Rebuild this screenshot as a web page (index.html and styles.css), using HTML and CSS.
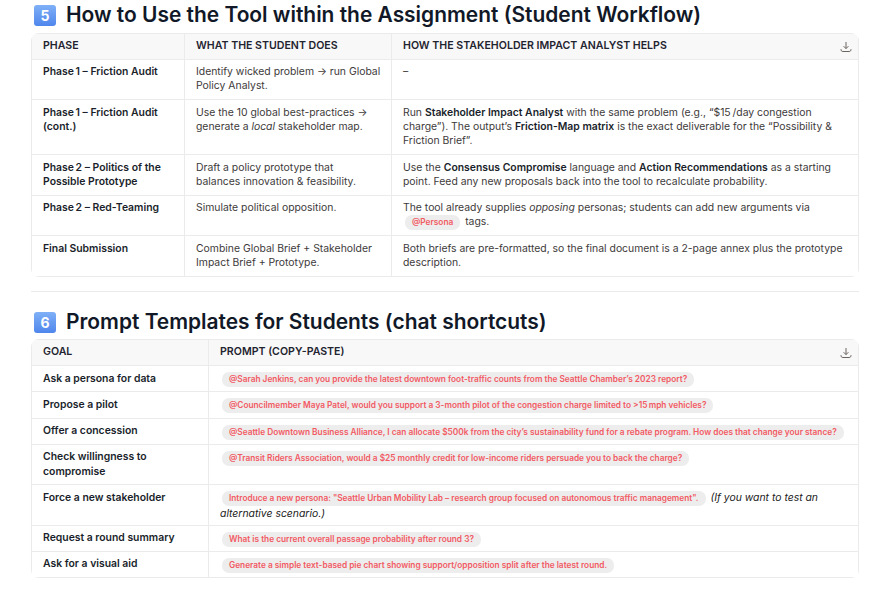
FILE: index.html
```html
<!DOCTYPE html>
<html lang="en">
<head>
<meta charset="utf-8">
<title>Student Workflow</title>
<link rel="stylesheet" href="styles.css">
</head>
<body>
<main class="doc">
  <h2 class="heading"><span class="keycap">5</span>How to Use the Tool within the Assignment (Student Workflow)</h2>
  <div class="table-wrap">
    <svg class="dl" viewBox="0 0 12 12" aria-hidden="true"><path d="M6 1v6.5M3.6 5.2 6 7.6l2.4-2.4M1 8.2c0 1.6.6 2.3 2 2.3h6c1.4 0 2-.7 2-2.3"/></svg>
    <table class="grid workflow">
      <thead><tr><th class="c1">PHASE</th><th class="c2">WHAT THE STUDENT DOES</th><th>HOW THE STAKEHOLDER IMPACT ANALYST HELPS</th></tr></thead>
      <tbody>
        <tr><td><b>Phase&#8239;1 – Friction Audit</b></td><td>Identify wicked problem → run Global Policy Analyst.</td><td>–</td></tr>
        <tr class="r55"><td><b>Phase&#8239;1 – Friction Audit (cont.)</b></td><td>Use the 10 global best-practices → generate a <i>local</i> stakeholder map.</td><td>Run <b>Stakeholder Impact Analyst</b> with the same problem (e.g., “$15&#8239;/day congestion charge”). The output’s <b>Friction-Map matrix</b> is the exact deliverable for the “Possibility &amp; Friction Brief”.</td></tr>
        <tr class="r41"><td><b>Phase&#8239;2 – Politics of the Possible Prototype</b></td><td>Draft a policy prototype that balances innovation &amp; feasibility.</td><td>Use the <b>Consensus Compromise</b> language and <b>Action Recommendations</b> as a starting point. Feed any new proposals back into the tool to recalculate probability.</td></tr>
        <tr><td><b>Phase&#8239;2 – Red-Teaming</b></td><td>Simulate political opposition.</td><td>The tool already supplies <i>opposing</i> personas; students can add new arguments via <code class="chip">@Persona</code> tags.</td></tr>
        <tr class="r41"><td><b>Final Submission</b></td><td>Combine Global Brief + Stakeholder Impact Brief + Prototype.</td><td>Both briefs are pre-formatted, so the final document is a 2-page annex plus the prototype description.</td></tr>
      </tbody>
    </table>
  </div>
  <hr class="rule">
  <h2 class="heading"><span class="keycap">6</span>Prompt Templates for Students (chat shortcuts)</h2>
  <div class="table-wrap">
    <svg class="dl" viewBox="0 0 12 12" aria-hidden="true"><path d="M6 1v6.5M3.6 5.2 6 7.6l2.4-2.4M1 8.2c0 1.6.6 2.3 2 2.3h6c1.4 0 2-.7 2-2.3"/></svg>
    <table class="grid prompts">
      <thead><tr><th class="g1">GOAL</th><th>PROMPT (COPY-PASTE)</th></tr></thead>
      <tbody>
        <tr><td><b>Ask a persona for data</b></td><td><code class="chip">@Sarah Jenkins, can you provide the latest downtown foot-traffic counts from the Seattle Chamber’s 2023 report?</code></td></tr>
        <tr class="r27"><td><b>Propose a pilot</b></td><td><code class="chip">@Councilmember Maya Patel, would you support a 3-month pilot of the congestion charge limited to &gt;15&#8239;mph vehicles?</code></td></tr>
        <tr class="up"><td><b>Offer a concession</b></td><td><code class="chip">@Seattle Downtown Business Alliance, I can allocate $500k from the city’s sustainability fund for a rebate program. How does that change your stance?</code></td></tr>
        <tr class="up r40"><td><b>Check willingness to compromise</b></td><td><code class="chip">@Transit Riders Association, would a $25 monthly credit for low-income riders persuade you to back the charge?</code></td></tr>
        <tr class="r41"><td><b>Force a new stakeholder</b></td><td><code class="chip">Introduce a new persona: "Seattle Urban Mobility Lab – research group focused on autonomous traffic management".</code> <i class="note">(If you want to test an alternative scenario.)</i></td></tr>
        <tr class="up"><td><b>Request a round summary</b></td><td><code class="chip">What is the current overall passage probability after round 3?</code></td></tr>
        <tr class="up"><td><b>Ask for a visual aid</b></td><td><code class="chip">Generate a simple text-based pie chart showing support/opposition split after the latest round.</code></td></tr>
      </tbody>
    </table>
  </div>
</main>
</body>
</html>
```
FILE: styles.css
```css
* { box-sizing: border-box; }
html, body { margin: 0; padding: 0; background: #fff; }
body { font-family: "Inter", "Liberation Sans", sans-serif; color: #3d3a3a; font-size: 10.4px; line-height: 14px; overflow: hidden; }
.doc { width: 828px; margin-left: 31px; padding-top: 2px; }
.heading { display: flex; align-items: center; gap: 10px; margin: 0 0 5px 3px; height: 26px; font-size: 20.93px; line-height: 26px; font-weight: 600; color: #111827; white-space: nowrap; }
.rule + .heading { margin-bottom: 4px; }
.keycap { flex: none; width: 22px; height: 21px; border-radius: 3px; background: linear-gradient(#7fb0f7, #4f86ec); color: #fff; font-size: 14px; line-height: 21px; font-weight: 700; text-align: center; }
.table-wrap { position: relative; border-radius: 8px; overflow: hidden; }
.grid { width: 100%; border-collapse: collapse; table-layout: fixed; }
.grid th, .grid td { border: 1px solid #ebebeb; padding: 5px 10.5px 5px 11px; vertical-align: top; text-align: left; }
.grid thead th { background: #f8f8f8; color: #1f2430; font-weight: 600; font-size: 10.6px; padding: 5px 11px; height: 26px; }
.grid b { color: #1a1f2b; font-weight: 600; }
.workflow tbody tr { height: 40px; }
.workflow .r55 { height: 55px; }
.workflow .r41 { height: 41px; }
.workflow .r55 td, .workflow .r41 td { padding-top: 6px; }
.prompts td { line-height: 15px; padding: 5px 9px 4px 11px; }
.prompts tbody tr { height: 26px; }
.prompts .r27 { height: 27px; }
.prompts .r40 { height: 40px; }
.prompts .r41 { height: 41px; }
.prompts .up td:first-child { padding-top: 4px; }
.c1 { width: 153px; }
.c2 { width: 207px; }
.g1 { width: 177px; }
.chip { display: inline-block; font-family: "Inter", "Liberation Sans", sans-serif; font-size: 8.3px; font-weight: 600; line-height: 15px; white-space: nowrap; color: #f25a64; background: #ededed; border-radius: 7px; padding: 0 7px; margin: 0 2px; }
.note { color: #222; font-size: 10.4px; }
.dl { position: absolute; right: 7.5px; top: 7.5px; width: 12px; height: 12px; fill: none; stroke: #6b6460; stroke-width: 1; }
.rule { height: 1px; border: 0; background: #ebebeb; margin: 14px 0 17px; }
```
